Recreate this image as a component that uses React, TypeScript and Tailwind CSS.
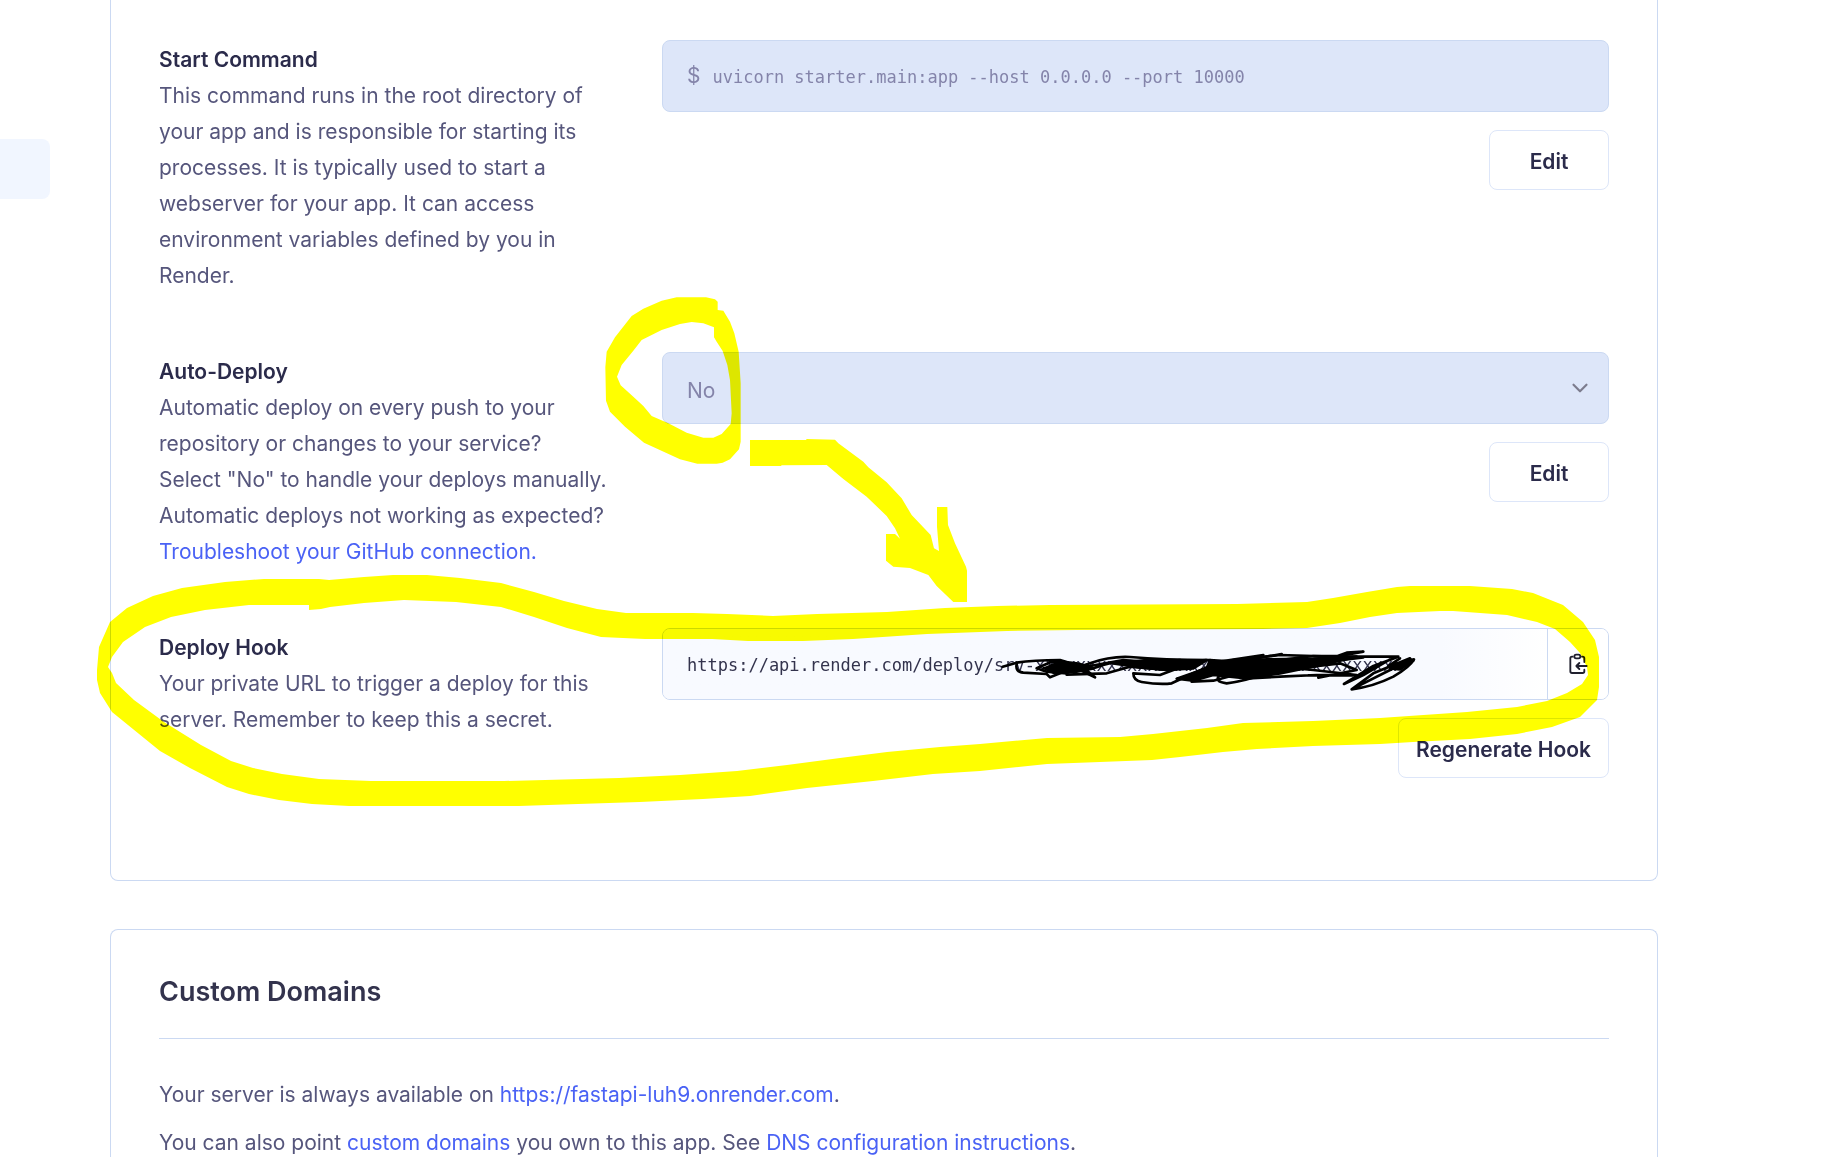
import type { ReactNode } from "react";
import { ChevronDown } from "lucide-react";

const HOOK_URL = "https://api.render.com/deploy/srv-xxxxxxxxxxxxxxxxxxxx?key=xxxxxxxxxxx";

const fieldBox = "h-[72px] w-full rounded-lg border border-[#cbd9f2] bg-[#dde6f9]";

function OutlineButton({ children }: { children: ReactNode }) {
  return (
    <button
      type="button"
      className="h-[60px] min-w-[120px] rounded-lg border border-[#dde6f9] bg-white px-[17px] pt-1 text-[21px] font-semibold text-[#2b2b4b]"
    >
      {children}
    </button>
  );
}

function SettingRow({
  id,
  title,
  description,
  control,
  action,
}: {
  id: string;
  title: string;
  description: ReactNode;
  control: ReactNode;
  action: string;
}) {
  return (
    <div className="grid grid-cols-[minmax(0,463px)_1fr] gap-x-10">
      <div className="pt-0.5">
        <label htmlFor={id} className="block font-semibold text-[#2b2b4b]">
          {title}
        </label>
        <p>{description}</p>
      </div>
      <div className="flex flex-col items-end gap-[18px]">
        {control}
        <OutlineButton>{action}</OutlineButton>
      </div>
    </div>
  );
}

function TextLink({ children }: { children: ReactNode }) {
  return (
    <a href="#" className="text-[#4a62f5]">
      {children}
    </a>
  );
}

function CopyIcon() {
  return (
    <svg
      viewBox="560 276 66 72"
      className="h-6 w-[22px]"
      fill="none"
      stroke="#20202e"
      strokeWidth="5.5"
      strokeLinecap="round"
      strokeLinejoin="round"
      aria-hidden="true"
    >
      <path d="M577 290h-2q-5 0-5 5v39q0 5 5 5h32q5 0 5-5v-5" />
      <path d="M605 290h2q5 0 5 5v11" />
      <rect x="582" y="284" width="18" height="11" rx="5.5" />
      <path d="M619 318H588M597 309l-9 9 9 9" />
    </svg>
  );
}

function Annotations() {
  return (
    <>
      <svg
        width="1843"
        height="1157"
        viewBox="0 0 1843 1157"
        className="pointer-events-none absolute top-0 left-0 mix-blend-multiply"
        fill="#ffff00"
        fillRule="evenodd"
        aria-hidden="true"
      >
        <g transform="translate(590 280) scale(0.33333)">
          <path d="M260 52L348 52L375 58L383 65L383 90L400 92L420 125L433 160L446 215L452 310L452 485L447 508L420 538L398 548L380 551L322 551L270 538L162 488L105 440L60 395L48 362L46 262L50 215L75 172L125 108L160 86L215 62ZM305 126L340 130L372 142L372 172L380 185L398 213L412 255L420 300L425 400L422 432L395 462L370 473L340 473L290 458L235 430L185 408L160 378L130 350L92 316L81 290L95 255L130 212L155 180L215 150L270 132Z" />
          <path d="M480 480L648 480L650 477L735 479L745 490L820 545L835 562L890 607L935 655L965 705L1022 765L1032 805L1047 813L1041 740L1041 681L1072 681L1074 735L1095 790L1128 860L1131 872L1131 966L1090 966L1040 918L1015 885L960 864L910 860L888 842L888 762L915 762L930 776L915 745L890 708L830 650L760 597L710 555L575 556L573 558L480 558Z" />
        </g>
        <path d="M97 670L99 647L110 622L127 608L153 596L182 588L225 582L264 579L319 579L329 580L364 577L393 575L427 575L460 578L501 583L534 592L564 601L597 609L626 613L693 613L727 614L773 616L817 614L887 612L945 608L997 606L1050 605L1237 604L1307 602L1333 598L1367 592L1397 587L1410 586L1470 586L1512 589L1533 593L1563 605L1583 622L1595 640L1599 657L1599 687L1597 700L1580 717L1552 727L1517 734L1470 739L1413 742L1380 744L1313 746L1257 749L1223 752L1180 757L1152 760L1100 762L1047 764L980 771L933 774L873 781L807 788L750 796L703 799L640 802L578 804L519 806L349 806L312 804L279 800L249 794L227 787L190 768L160 751L112 712L100 693L97 680ZM108 667L112 657L123 642L145 627L171 617L205 610L249 605L309 605L309 610L321 609L330 607L364 603L404 600L456 602L501 607L534 617L567 628L601 637L645 639L712 639L748 641L803 641L853 639L927 634L1007 631L1077 630L1263 629L1307 628L1340 623L1370 617L1397 613L1440 611L1453 611L1507 615L1537 622L1555 629L1570 642L1580 653L1587 667L1588 675L1582 684L1567 693L1547 701L1517 707L1467 712L1380 718L1313 721L1243 723L1207 728L1153 734L1120 737L1047 738L980 744L940 747L887 752L840 758L787 765L737 771L680 775L619 778L504 781L371 781L319 779L282 774L253 768L231 761L201 745L164 722L134 700L116 683L112 673Z" />
      </svg>
      <svg
        width="1843"
        height="1157"
        viewBox="0 0 1843 1157"
        className="pointer-events-none absolute top-0 left-0"
        fill="none"
        stroke="#000"
        strokeWidth="8"
        strokeLinecap="round"
        strokeLinejoin="round"
        aria-hidden="true"
      >
        <g transform="translate(980 560) scale(0.33333)">
          <path d="M68 320L110 308Q160 300 240 300L300 318L260 340L200 335L170 325L215 305L290 310L325 335L345 352L300 330" />
          <path d="M110 312Q105 336 130 338L200 342L210 352L240 340L330 310Q390 288 450 291Q550 300 690 300" />
          <path d="M190 325L330 318L430 300L520 308L600 300L640 312L560 330L450 320L380 340L260 344" />
          <path d="M340 325Q400 300 470 304L620 315L540 345L460 340Q460 362 485 366Q540 375 575 370L640 340L720 305L850 285" />
          <path d="M635 365L700 362L800 335L900 300L1000 288L1080 288L1150 275L1100 278L1050 296" />
          <path d="M600 355L760 300L900 285L1050 290L1255 290L1180 318L1092 372L1150 345L1230 298" />
          <path d="M720 345Q700 365 740 370Q790 365 860 340L1000 310L1150 292M720 315L905 282" />
          <path d="M790 356L900 350L1010 345L1130 345L1000 330L950 325L1080 310L1130 330L1015 353M985 346H1120" />
          <path d="M1115 388L1180 340L1290 295L1230 330L1115 388Q1180 380 1240 350Q1290 320 1302 298L1225 318L1260 295" />
          <path
            d="M590 356L680 325L690 300L760 305L860 298L1000 296L1130 290L1010 318L900 340L800 355L700 345L640 362ZM195 325L240 305L300 312L340 325L290 335L220 338ZM400 310L500 300L610 305L680 300L640 325L560 330L480 322ZM1230 325L1290 298L1300 302L1260 328Z"
            fill="#000"
          />
        </g>
      </svg>
    </>
  );
}

export default function App() {
  return (
    <div className="relative flex h-screen overflow-hidden bg-white font-['Inter',sans-serif] text-[21px] leading-9 text-[#56567c]">
      <aside className="w-[110px] shrink-0 pt-[139px]">
        <div className="h-[60px] w-[50px] rounded-r-lg bg-[#f1f6ff]" />
      </aside>

      <main className="mr-[185px] flex min-w-0 flex-1 flex-col gap-12">
        <section className="flex shrink-0 flex-col gap-[58px] rounded-b-lg border border-t-0 border-[#cbd9f2] px-12 pt-10 pb-[102px]">
          <SettingRow
            id="start-command"
            title="Start Command"
            description="This command runs in the root directory of your app and is responsible for starting its processes. It is typically used to start a webserver for your app. It can access environment variables defined by you in Render."
            control={
              <div className={`${fieldBox} flex items-center gap-3 pl-6 text-[#8484aa]`}>
                <span>$</span>
                <input
                  id="start-command"
                  disabled
                  value="uvicorn starter.main:app --host 0.0.0.0 --port 10000"
                  className="h-full min-w-0 flex-1 bg-transparent pt-0.5 font-['DejaVu_Sans_Mono',monospace] text-[17px]"
                />
              </div>
            }
            action="Edit"
          />
          <SettingRow
            id="auto-deploy"
            title="Auto-Deploy"
            description={
              <>
                Automatic deploy on every push to your repository or changes to your service?
                <br />
                Select "No" to handle your deploys manually.
                <br />
                Automatic deploys not working as expected?
                <br />
                <TextLink>Troubleshoot your GitHub connection.</TextLink>
              </>
            }
            control={
              <div className="relative w-full">
                <select
                  id="auto-deploy"
                  disabled
                  className={`${fieldBox} block appearance-none px-6 pt-1.5 text-[#8484aa] opacity-100`}
                >
                  <option>No</option>
                </select>
                <ChevronDown
                  size={26}
                  className="pointer-events-none absolute top-[23px] right-4 text-[#7c7c8e]"
                />
              </div>
            }
            action="Edit"
          />
          <SettingRow
            id="deploy-hook"
            title="Deploy Hook"
            description="Your private URL to trigger a deploy for this server. Remember to keep this a secret."
            control={
              <div className="flex h-[72px] w-full overflow-hidden rounded-lg border border-[#cbd9f2]">
                <input
                  id="deploy-hook"
                  readOnly
                  value={HOOK_URL}
                  className="min-w-0 flex-1 bg-linear-to-r from-[#f8faff] from-88% to-white pt-0.5 pl-6 font-['DejaVu_Sans_Mono',monospace] text-[17px] text-[#33334d]"
                />
                <button
                  type="button"
                  aria-label="Copy deploy hook"
                  className="flex w-[61px] items-center justify-center border-l border-[#cbd9f2] bg-white"
                >
                  <CopyIcon />
                </button>
              </div>
            }
            action="Regenerate Hook"
          />
        </section>

        <section className="shrink-0 rounded-t-lg border border-b-0 border-[#cbd9f2] px-12 pt-11">
          <h2 className="border-b border-[#cbd9f2] pb-7 text-[27px] font-semibold text-[#33334d]">
            Custom Domains
          </h2>
          <div className="flex flex-col gap-3 pt-[38px]">
            <p>
              Your server is always available on <TextLink>https://fastapi-luh9.onrender.com</TextLink>.
            </p>
            <p>
              You can also point <TextLink>custom domains</TextLink> you own to this app. See{" "}
              <TextLink>DNS configuration instructions</TextLink>.
            </p>
          </div>
        </section>
      </main>

      <Annotations />
    </div>
  );
}
